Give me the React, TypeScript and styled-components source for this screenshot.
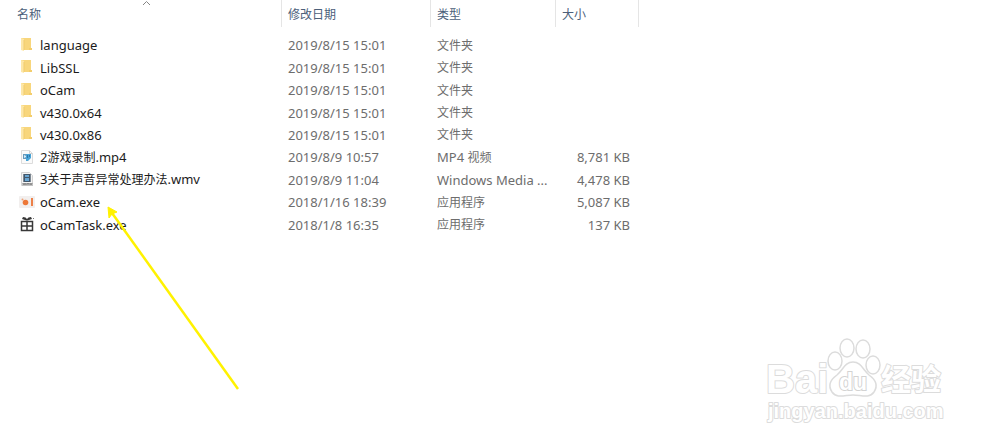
import React from 'react';
import styled, { createGlobalStyle } from 'styled-components';

const GlobalStyle = createGlobalStyle`
  body {
    margin: 0;
    background: #fff;
    font-family: "Noto Sans", "Noto Sans CJK SC", sans-serif;
    font-size: 13px;
  }
`;

const Page = styled.main`
  position: relative;
  min-height: 100vh;
  overflow: hidden;
`;

const FileTable = styled.table`
  display: block;
  color: #6d6d6d;
`;

const Head = styled.thead`
  display: block;
  padding-bottom: 7px;
`;

const Body = styled.tbody`
  display: grid;
  grid-auto-rows: 1fr;
  height: 202px;
`;

const Row = styled.tr`
  display: grid;
  grid-template-columns: 282px 149px 125px 83px;
  align-items: center;
`;

const HeadCell = styled.th`
  position: relative;
  box-sizing: border-box;
  height: 27px;
  padding: 0;
  border-right: 1px solid #e5e5e5;
  text-align: left;
`;

const SortButton = styled.button<{ $first?: boolean }>`
  display: block;
  width: 100%;
  height: 27px;
  padding: 2px 0 0 ${(p) => (p.$first ? 17 : 6)}px;
  border: 0;
  background: none;
  color: #4c607a;
  font: inherit;
  font-size: 12px;
  font-weight: 400;
  line-height: 25px;
  text-align: left;
`;

const SortMark = styled.svg`
  position: absolute;
  top: 0;
  left: 142px;
`;

const Cell = styled.td<{ $end?: boolean }>`
  padding: 0 ${(p) => (p.$end ? 9 : 0)}px 0 6px;
  line-height: 20px;
  text-align: ${(p) => (p.$end ? 'right' : 'left')};
  white-space: nowrap;
`;

const NameCell = styled.td`
  display: flex;
  align-items: center;
  gap: 4px;
  padding: 0 0 0 19px;
  color: #1b1b1b;
  line-height: 20px;
  white-space: nowrap;
`;

const Han = styled.span`
  font-size: 12px;
`;

const Icon = styled.svg`
  flex: none;
  width: 17px;
  height: 17px;
`;

const Arrow = styled.svg`
  position: absolute;
  top: 200px;
  left: 100px;
  pointer-events: none;
`;

const Watermark = styled.svg`
  position: absolute;
  right: 46px;
  bottom: 18px;
  pointer-events: none;
`;

type Kind = 'folder' | 'mp4' | 'wmv' | 'ocam' | 'task';

function FileIcon({ kind }: { kind: Kind }) {
  switch (kind) {
    case 'folder':
      return (
        <Icon viewBox="0 0 17 17" aria-hidden="true">
          <path d="M2 1h10v12H2z" fill="#f8d67c" />
          <path d="M2 1l3 1v12l-3-1z" fill="#fde7a8" />
          <path d="M5 3v10" stroke="#f0cb6c" />
          <path d="M10 11h3v2h-3z" fill="#f3cd6c" />
        </Icon>
      );
    case 'mp4':
      return (
        <Icon viewBox="0 0 17 17" aria-hidden="true">
          <path d="M2.500 1.500h8l3 3v10h-11z" fill="#fafafa" stroke="#dcdcdc" />
          <path d="M10.500 1.500v3h3" fill="none" stroke="#cfcfcf" />
          <path d="M4 5h4v5H4z" fill="#6799bb" />
          <path d="M5 6l3 1.500L5 9z" fill="#d8effa" />
          <path d="M7 5h5v4l-3 3H7z" fill="#48a3d6" />
          <path d="M8.500 6v3M10.500 6v2" stroke="#2c76a8" />
        </Icon>
      );
    case 'wmv':
      return (
        <Icon viewBox="0 0 17 17" aria-hidden="true">
          <path d="M2.500 1.500h8l3 3v10h-11z" fill="#f4f4f4" stroke="#d2d2d2" />
          <path d="M4 3h8v8H4z" fill="#7b8792" />
          <path d="M5 3h6v8H5z" fill="#42586c" />
          <path d="M6 4h4v2H6zM6 7h4v3H6z" fill="#68a5d2" />
          <path d="M3 12h11v3H3z" fill="#c2c2c2" />
          <path d="M4 12l1 2 1-2 1 2M8 14v-2l1 1 1-1v2M11 12l1 2 1-2" fill="none" stroke="#858585" />
        </Icon>
      );
    case 'ocam':
      return (
        <Icon viewBox="0 0 17 17" aria-hidden="true">
          <rect x="0" y="2" width="16" height="12" rx="1" fill="#f2efee" />
          <circle cx="6.500" cy="8.500" r="2.800" fill="#ed7838" />
          <circle cx="3.500" cy="5.500" r="1" fill="#f0a177" />
          <path d="M12 4h2v8h-2z" fill="#ed8048" />
        </Icon>
      );
    default:
      return (
        <Icon viewBox="0 0 17 17" aria-hidden="true">
          <path d="M2.500 5.500h11v9h-11zM2.500 10h11M8 5v10" fill="none" stroke="#383838" strokeWidth="1.500" />
          <path d="M7.500 4.500L3 3l1-2 2.500.5 1.500 1.500 1.500-1.500L12 1l1 2-4.500 1.500z" fill="#383838" />
          <path d="M14 2h1v1h-1z" fill="#777" />
        </Icon>
      );
  }
}

/* Han characters are set one size below the Latin text beside them. */
function Mixed({ text }: { text: string }) {
  return (
    <span>
      {text
        .split(/([\u4e00-\u9fff]+)/)
        .filter(Boolean)
        .map((part, i) => (/[\u4e00-\u9fff]/.test(part) ? <Han key={i}>{part}</Han> : part))}
    </span>
  );
}

const columns = ['名称', '修改日期', '类型', '大小'];

const files: { name: string; date: string; type: string; size: string; kind: Kind }[] = [
  { name: 'language', date: '2019/8/15 15:01', type: '文件夹', size: '', kind: 'folder' },
  { name: 'LibSSL', date: '2019/8/15 15:01', type: '文件夹', size: '', kind: 'folder' },
  { name: 'oCam', date: '2019/8/15 15:01', type: '文件夹', size: '', kind: 'folder' },
  { name: 'v430.0x64', date: '2019/8/15 15:01', type: '文件夹', size: '', kind: 'folder' },
  { name: 'v430.0x86', date: '2019/8/15 15:01', type: '文件夹', size: '', kind: 'folder' },
  { name: '2游戏录制.mp4', date: '2019/8/9 10:57', type: 'MP4 视频', size: '8,781 KB', kind: 'mp4' },
  { name: '3关于声音异常处理办法.wmv', date: '2019/8/9 11:04', type: 'Windows Media ...', size: '4,478 KB', kind: 'wmv' },
  { name: 'oCam.exe', date: '2018/1/16 18:39', type: '应用程序', size: '5,087 KB', kind: 'ocam' },
  { name: 'oCamTask.exe', date: '2018/1/8 16:35', type: '应用程序', size: '137 KB', kind: 'task' },
];

function BaiduWatermark() {
  return (
    <Watermark width="190" height="96" viewBox="0 0 190 96" aria-label="Baidu 经验">
      <g fill="#fff" stroke="#dcdcdc" strokeWidth="2" strokeLinejoin="round" paintOrder="stroke">
        <text x="2" y="61" fontFamily="Liberation Sans, sans-serif" fontWeight="700" fontSize="40">Bai</text>
        <text x="117" y="58" fontFamily="Noto Sans CJK SC, sans-serif" fontWeight="700" fontSize="30">经验</text>
        <text x="4" y="86" fontFamily="Liberation Sans, sans-serif" fontWeight="700" fontSize="20">jingyan.baidu.com</text>
      </g>
      <g fill="#fff" stroke="#dcdcdc" strokeWidth="1.500">
        <ellipse cx="71" cy="29" rx="7" ry="9" />
        <ellipse cx="83" cy="16" rx="7" ry="9" />
        <ellipse cx="99" cy="17" rx="7" ry="9" />
        <ellipse cx="109" cy="33" rx="7" ry="9" />
        <path d="M89 30c8 0 10 8 16 13 7 5 9 11 5 17-5 7-13 3-21 3s-16 4-21-3c-4-6-2-12 5-17 6-5 8-13 16-13z" />
      </g>
      <text x="75" y="58" fontFamily="Liberation Sans, sans-serif" fontWeight="700" fontSize="23" fill="#fff" stroke="#d3d3d3" strokeWidth="2" paintOrder="stroke">du</text>
    </Watermark>
  );
}

export default function App() {
  return (
    <Page>
      <GlobalStyle />
      <FileTable cellSpacing={0}>
        <Head>
          <Row>
            {columns.map((label, i) => (
              <HeadCell key={label} scope="col" aria-sort={i === 0 ? 'ascending' : undefined}>
                <SortButton type="button" $first={i === 0}>{label}</SortButton>
                {i === 0 && (
                  <SortMark width="9" height="6" viewBox="0 0 9 6" aria-hidden="true">
                    <path d="M1 5l3.500-3.500L8 5" fill="none" stroke="#858585" />
                  </SortMark>
                )}
              </HeadCell>
            ))}
          </Row>
        </Head>
        <Body>
          {files.map((file) => (
            <Row key={file.name}>
              <NameCell>
                <FileIcon kind={file.kind} />
                <Mixed text={file.name} />
              </NameCell>
              <Cell>{file.date}</Cell>
              <Cell><Mixed text={file.type} /></Cell>
              <Cell $end>{file.size}</Cell>
            </Row>
          ))}
        </Body>
      </FileTable>
      <Arrow width="144" height="194" viewBox="0 0 144 194" aria-hidden="true">
        <path d="M12 13L138 189" stroke="#fff200" strokeWidth="2.500" />
        <path d="M8 7l1 11 3-4 5-2z" fill="#fff200" stroke="#fff200" />
      </Arrow>
      <BaiduWatermark />
    </Page>
  );
}
